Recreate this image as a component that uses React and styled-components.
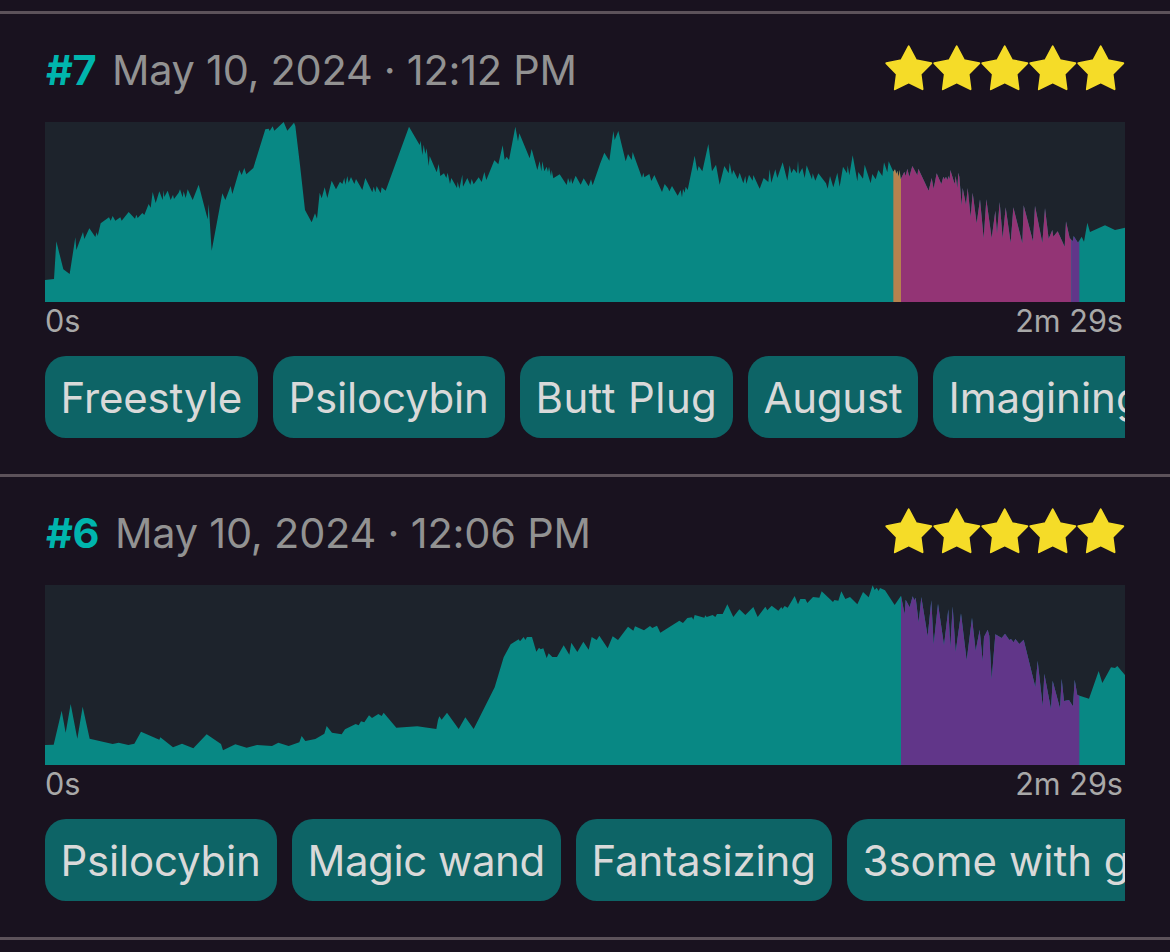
import React from "react";
import styled, { createGlobalStyle } from "styled-components";

const GlobalStyle = createGlobalStyle`
  * { box-sizing: border-box; }
  html, body { margin: 0; background: #19121f; overflow: hidden; }
`;

const Page = styled.main`
  height: 952px;
  padding-top: 11px;
  overflow: hidden;
  background: #19121f;
  font-family: Inter, "Liberation Sans", sans-serif;
`;

const Session = styled.article`
  display: flex;
  flex-direction: column;
  height: 463px;
  padding: 0 45px;
  border-top: 3px solid #5c525a;
`;

const EndRule = styled.div`
  height: 3px;
  background: #5c525a;
`;

const Header = styled.header`
  display: flex;
  align-items: center;
  justify-content: space-between;
  height: 108px;
  padding-top: 4px;
`;

const Title = styled.div`
  display: flex;
  align-items: baseline;
  height: 52px;
  line-height: 52px;
  font-size: 41.5px;
  white-space: nowrap;
`;

const Number = styled.span`
  width: ${(p) => p.$width}px;
  padding-left: 1px;
  color: #00b5ad;
  font-weight: 700;
  letter-spacing: -0.5px;
`;

const DateText = styled.span`
  color: #929292;
  letter-spacing: ${(p) => p.$tracking}px;
`;

const Stars = styled.div`
  display: flex;
  margin-bottom: 4px;
`;

const StarIcon = styled.svg`
  display: block;
  width: 48px;
  height: 48px;
  fill: #f5dc28;
  stroke: #f5dc28;
  stroke-width: 2;
  stroke-linejoin: round;
`;

const Chart = styled.svg`
  display: block;
  width: 1080px;
  height: 180px;
  background: #1d232c;
`;

const Axis = styled.div`
  display: flex;
  justify-content: space-between;
  height: 54px;
  padding: 0 2px 0 0;
  color: #a8a8a8;
  font-size: 30.6px;
  line-height: 38px;
`;

const Tags = styled.div`
  display: flex;
  gap: 15px;
  overflow: hidden;
`;

const Tag = styled.span`
  flex: none;
  width: ${(p) => p.$width}px;
  height: 82px;
  padding-left: 15.5px;
  border-radius: 21px;
  background: #0d6466;
  color: #d9d9d9;
  font-size: 42px;
  line-height: 84px;
  letter-spacing: ${(p) => p.$tracking}px;
  white-space: nowrap;
`;

const TEAL = "#088884";

const sessions = [
  {
    id: 7,
    numberWidth: 67,
    date: "May 10, 2024 · 12:12 PM",
    dateTracking: -0.28,
    bands: [
      { from: 2545, to: 2568, color: "#b5824e" },
      { from: 2568, to: 3079, color: "#933475" },
      { from: 3079, to: 3103, color: "#613689" },
    ],
    points:
      "0,474 27,471 34,358 55,442 74,456 91,346 94,384 114,330 118,351 133,319 151,345 155,331 158,342 167,304 192,286 197,296 203,282 211,296 226,286 230,296 251,270 270,290 274,278 278,288 292,273 298,279 311,246 317,257 323,210 332,243 343,208 353,234 356,205 358,225 368,206 377,234 384,218 387,231 401,212 405,202 413,226 416,208 422,228 428,202 443,234 461,188 488,292 491,246 500,386 532,214 541,234 557,192 562,216 583,144 590,159 598,138 604,157 625,138 661,22 671,20 674,27 683,13 688,26 716,0 727,26 747,2 751,12 " +
      "765,129 780,264 800,301 810,274 816,290 824,212 830,229 839,196 847,228 860,176 873,202 885,179 892,186 898,168 901,188 907,162 911,182 918,165 928,186 933,171 952,204 961,168 982,211 986,194 991,211 995,192 1007,214 1010,196 1022,206 1092,14 1124,69 1127,56 1132,99 1136,68 1141,96 1145,79 1151,132 1154,102 1175,151 1181,126 1186,162 1197,154 1204,168 1208,152 1215,186 1219,168 1236,198 1238,179 1243,200 1252,158 1254,194 1267,168 1276,189 1280,171 1286,187 1301,166 1310,180 1318,150 1324,174 1348,115 1360,127 1373,70 1379,114 1385,104 1392,114 1411,14 1419,58 1423,34 1454,109 1460,81 1477,144 1484,117 1489,148 1492,118 1498,148 1505,134 1509,150 1512,134 1518,162 1520,144 1525,169 1544,157 1565,189 1569,168 1575,184 1578,168 1582,186 1592,161 1607,188 1616,169 1631,193 1638,172 1643,190 1665,126 " +
      "1678,92 1693,116 1705,27 1709,54 1720,27 1742,118 1749,96 1760,114 1763,90 1791,167 1795,152 1798,166 1813,156 1819,177 1828,159 1851,210 1859,186 1869,199 1873,208 1881,192 1898,221 1907,204 1911,226 1914,200 1919,212 1922,194 1928,204 1949,101 1957,148 1961,132 1972,148 1990,66 2001,148 2013,128 2024,188 2038,132 2051,154 2054,122 2061,158 2065,144 2078,171 2084,152 2095,184 2101,162 2104,186 2112,158 2123,176 2125,159 2144,200 2156,168 2170,180 2174,142 2179,182 2191,142 2197,168 2213,121 2227,176 2234,130 2239,154 2246,140 2256,154 2259,116 2262,156 2272,138 2279,168 2285,130 2301,172 2303,154 2311,176 2320,154 2343,184 2348,200 2355,162 2365,196 2377,152 2384,194 2394,134 2406,154 2408,130 2413,160 2423,100 2437,178 2440,150 2454,170 2459,128 2477,184 2482,156 2492,172 2500,144 2512,162 2517,121 2527,151 2531,118 2545,149 " +
      "2550,142 2554,156 2557,146 2561,164 2564,144 2567,172 2578,149 2582,162 2587,140 2593,164 2602,132 2617,160 2620,140 2651,206 2660,168 2666,200 2675,154 2689,186 2695,164 2699,172 2703,164 2707,174 2711,162 2714,172 2716,144 2729,186 2732,162 2737,198 2740,152 2743,164 2750,250 2753,198 2763,248 2768,198 2777,284 2783,212 2795,304 2805,232 2816,348 2824,232 2840,348 2851,266 2856,334 2864,240 2873,348 2882,256 2897,362 2905,256 2932,364 2936,250 2964,358 2970,251 2992,362 3000,258 3011,350 3022,324 3025,344 3038,328 3059,374 3063,298 3074,348 3083,358 3086,342 3099,362 3110,344 3117,359 3127,302 3135,330 3180,310 3210,324 3240,317",
    duration: "2m 29s",
    tags: [
      { label: "Freestyle", width: 213, tracking: -0.15 },
      { label: "Psilocybin", width: 232, tracking: -0.2 },
      { label: "Butt Plug", width: 213, tracking: 0.4 },
      { label: "August", width: 170, tracking: -0.25 },
      { label: "Imagining", width: 230, tracking: 0 },
    ],
  },
  {
    id: 6,
    numberWidth: 70,
    date: "May 10, 2024 · 12:06 PM",
    dateTracking: -0.22,
    bands: [{ from: 2568, to: 3103, color: "#613689" }],
    points:
      "0,480 26,479 50,377 62,443 77,357 97,461 113,365 134,461 203,477 221,473 250,480 268,476 288,440 343,464 346,457 384,487 411,476 445,490 485,448 528,477 534,496 571,478 605,488 636,480 681,483 700,473 731,483 763,472 770,453 781,468 811,462 838,446 845,423 " +
      "861,443 890,448 900,433 932,417 941,421 948,409 958,412 972,391 981,399 1000,387 1010,393 1016,383 1054,428 1117,424 1174,432 1179,405 1183,394 1190,404 1206,383 1241,432 1261,397 1286,432 1349,307 1376,217 1397,178 1421,163 1425,169 1436,156 1441,165 1446,156 1461,156 1474,200 1482,188 1487,193 1495,190 1505,219 1511,205 1522,216 1536,216 1556,181 1573,209 1579,173 1597,201 1615,170 1631,194 1640,156 1655,165 1663,152 " +
      "1688,190 1703,154 1719,165 1749,125 1765,137 1770,124 1797,136 1815,123 1822,129 1836,122 1846,143 1903,107 1914,114 1927,99 1941,97 1945,104 1949,90 1978,98 1981,91 1985,96 2003,90 2011,96 2016,87 2033,87 2047,58 2065,96 2083,73 2101,90 2125,66 2138,96 2161,65 2167,76 2180,62 2200,77 2209,66 2212,72 2219,63 2228,68 2249,33 2259,58 2266,42 2281,42 2287,54 2304,36 2323,38 2330,19 2364,51 2368,45 2380,47 2389,19 2401,42 2415,36 2437,58 2454,21 2471,37 2483,1 " +
      "2489,15 2495,8 2501,18 2505,9 2520,16 2549,60 2568,32 2579,88 2582,44 2594,67 2603,34 2608,46 2612,38 2621,112 2629,36 2648,154 2659,46 2666,178 2679,56 2697,180 2710,73 2716,186 2723,64 2732,200 2748,85 2765,226 2781,98 2792,197 2804,134 2813,228 2817,156 2828,134 2833,152 2840,282 2851,148 2870,159 2880,146 2893,165 2898,162 2906,172 2911,162 2923,177 2936,164 2971,306 2978,227 2993,363 2998,266 3018,372 3023,287 3045,370 3050,281 3057,348 3072,345 3084,364 3089,284 3097,330 3132,341 3161,258 3172,294 3198,247 3210,249 3217,243 3240,270",
    duration: "2m 29s",
    tags: [
      { label: "Psilocybin", width: 232, tracking: -0.2 },
      { label: "Magic wand", width: 269, tracking: -0.45 },
      { label: "Fantasizing", width: 256, tracking: -0.15 },
      { label: "3some with g", width: 320, tracking: 0 },
    ],
  },
];

function Star() {
  return (
    <StarIcon viewBox="0 0 48 48" aria-hidden="true">
      <path d="M23.7 2.4 L31 16.2 L46.2 19.2 L35.5 30 L37.5 45.2 L23.7 38.4 L9.9 45.2 L11.9 30 L1.4 19.2 L16.4 16.2 Z" />
    </StarIcon>
  );
}

function IntensityChart({ id, points, bands }) {
  const shape = `0,540 ${points} 3240,540`;
  return (
    <Chart viewBox="0 0 3240 540" preserveAspectRatio="none" role="img">
      <defs>
        <clipPath id={`area-${id}`}>
          <polygon points={shape} />
        </clipPath>
      </defs>
      <g clipPath={`url(#area-${id})`}>
        <rect width="3240" height="540" fill={TEAL} />
        {bands.map((b) => (
          <rect key={b.from} x={b.from} width={b.to - b.from} height="540" fill={b.color} />
        ))}
      </g>
    </Chart>
  );
}

export default function App() {
  return (
    <>
      <GlobalStyle />
      <Page>
        {sessions.map((s) => (
          <Session key={s.id}>
            <Header>
              <Title>
                <Number $width={s.numberWidth}>#{s.id}</Number>
                <DateText $tracking={s.dateTracking}>{s.date}</DateText>
              </Title>
              <Stars>
                {[1, 2, 3, 4, 5].map((n) => (
                  <Star key={n} />
                ))}
              </Stars>
            </Header>
            <IntensityChart id={s.id} points={s.points} bands={s.bands} />
            <Axis>
              <span>0s</span>
              <span>{s.duration}</span>
            </Axis>
            <Tags>
              {s.tags.map((t) => (
                <Tag key={t.label} $width={t.width} $tracking={t.tracking}>
                  {t.label}
                </Tag>
              ))}
            </Tags>
          </Session>
        ))}
        <EndRule />
      </Page>
    </>
  );
}
